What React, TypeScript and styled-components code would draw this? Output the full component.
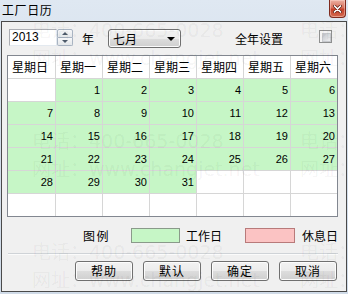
import React from "react";
import styled, { createGlobalStyle } from "styled-components";

const Global = createGlobalStyle`
  html, body { margin: 0; padding: 0; }
  body {
    width: 348px; height: 294px; overflow: hidden;
    background: #d6e1ee;
    font-family: "Noto Sans CJK SC", "Liberation Sans", sans-serif;
    color: #000;
  }
`;

const Window = styled.div`
  width: 348px;
  height: 294px;
  display: flex;
  flex-direction: column;
  background: linear-gradient(#dfe8f2, #d3deeb 40%, #d0dbe8);
`;

const TitleBar = styled.div`
  height: 21px;
  display: flex;
  align-items: flex-start;
  justify-content: space-between;
  padding-left: 2px;
`;

const Title = styled.div`
  font-size: 12px;
  line-height: 12px;
  margin-top: 4px;
  letter-spacing: 0.6px;
`;

const CloseButton = styled.div`
  width: 17px;
  height: 18px;
  margin-right: 2px;
  box-sizing: border-box;
  border: 1px solid #7e2a1e;
  border-top: none;
  border-radius: 0 0 4px 4px;
  background: linear-gradient(#ecb1a3, #d9705b 45%, #c5402a 55%, #d46a50);
  box-shadow: inset 0 0 0 1px rgba(255, 220, 210, 0.45);
  display: flex;
  align-items: center;
  justify-content: center;
`;

const Client = styled.div`
  position: relative;
  margin-left: 1px;
  width: 346px;
  height: 271px;
  box-sizing: border-box;
  border: 1px solid #4a4a4a;
  background: #f0f0f0;
  overflow: hidden;
  display: flex;
  flex-direction: column;
`;

const TopRow = styled.div`
  display: flex;
  align-items: flex-start;
  margin: 7px 0 0 7px;
  height: 19px;
`;

const YearBox = styled.div`
  width: 48px;
  height: 17px;
  box-sizing: border-box;
  border: 1px solid #abadb3;
  border-right-color: #e3e9ef;
  border-bottom-color: #e3e9ef;
  background: #fff;
  font-family: "Liberation Sans", sans-serif;
  font-size: 12px;
  line-height: 15px;
  padding-left: 2px;
`;

const Spinner = styled.div`
  width: 16px;
  height: 17px;
  display: flex;
  flex-direction: column;
`;

const SpinButton = styled.div<{ $down?: boolean }>`
  flex: 1;
  box-sizing: border-box;
  border: 1px solid #a9b4c2;
  border-top-width: ${(p) => (p.$down ? 0 : 1)}px;
  border-radius: ${(p) => (p.$down ? "0 0 2px 2px" : "2px 2px 0 0")};
  background: linear-gradient(#f7f8f9, #e4e7ea);
  display: flex;
  align-items: center;
  justify-content: center;
  &::after {
    content: "";
    border-left: 3px solid transparent;
    border-right: 3px solid transparent;
    ${(p) => (p.$down ? "border-top: 3px solid #4d5a6a;" : "border-bottom: 3px solid #4d5a6a;")}
  }
`;

const Label = styled.div<{ $ml: number; $ls?: number }>`
  margin-left: ${(p) => p.$ml}px;
  font-size: 12px;
  line-height: 19px;
  letter-spacing: ${(p) => p.$ls ?? 0}px;
  white-space: nowrap;
`;

const Select = styled.div`
  margin-left: 14px;
  width: 73px;
  height: 19px;
  box-sizing: border-box;
  border: 1px solid #707070;
  border-radius: 3px;
  background: linear-gradient(#f2f2f2, #ebebeb 50%, #dddddd 51%, #cfcfcf);
  box-shadow: inset 0 0 0 1px #fbfbfb;
  display: flex;
  align-items: center;
  justify-content: space-between;
  padding: 0 5px 0 4px;
  font-size: 12px;
  line-height: 17px;
  &::after {
    content: "";
    border-left: 4px solid transparent;
    border-right: 4px solid transparent;
    border-top: 4px solid #000;
  }
`;

const CheckBox = styled.div`
  margin: 1px 0 0 36px;
  width: 13px;
  height: 13px;
  box-sizing: border-box;
  border: 1px solid #8e8f8f;
  background: #f4f4f4;
  padding: 2px;
  &::after {
    content: "";
    display: block;
    width: 7px;
    height: 7px;
    border: 1px solid #c6c8cc;
    background: linear-gradient(135deg, #c3c7cd, #eeeff0);
  }
`;

const Grid = styled.div`
  margin: 7px 0 0 5px;
  width: 331px;
  box-sizing: border-box;
  border: 1px solid #828790;
  display: grid;
  grid-template-columns: 47px repeat(6, 46px);
  grid-auto-rows: 22px;
  gap: 1px;
  background: #d6d6d6;
`;

const HeadCell = styled.div`
  background: #fff;
  font-size: 12px;
  line-height: 22px;
  padding-left: 4px;
  white-space: nowrap;
`;

const DayCell = styled.div<{ $work: boolean }>`
  background: ${(p) => (p.$work ? "#c6f6c6" : "#fff")};
  font-family: "Liberation Sans", sans-serif;
  font-size: 11px;
  line-height: 22px;
  text-align: right;
  padding-right: 2px;
`;

const LegendRow = styled.div`
  display: flex;
  align-items: center;
  height: 16px;
  margin-top: 10px;
`;

const Swatch = styled.div<{ $ml: number; $w: number; $bg: string; $bd: string }>`
  margin-left: ${(p) => p.$ml}px;
  width: ${(p) => p.$w}px;
  height: 15px;
  box-sizing: border-box;
  background: ${(p) => p.$bg};
  border: 1px solid ${(p) => p.$bd};
`;

const Separator = styled.div`
  margin: 10px 0 0 6px;
  width: 330px;
  height: 0;
  border-top: 1px solid #cfd3d7;
  border-bottom: 1px solid #fbfbfb;
`;

const ButtonRow = styled.div`
  display: flex;
  gap: 10px;
  margin: 6px 0 0 73px;
`;

const Button = styled.div`
  width: 58px;
  height: 20px;
  box-sizing: border-box;
  border: 1px solid #707070;
  border-radius: 3px;
  background: linear-gradient(#f2f2f2, #ebebeb 50%, #dddddd 51%, #cfcfcf);
  box-shadow: inset 0 0 0 1px #fcfcfc;
  font-size: 12px;
  line-height: 18px;
  text-align: center;
  letter-spacing: 1px;
`;

const Watermark = styled.div<{ $top: number; $left: number }>`
  position: absolute;
  top: ${(p) => p.$top}px;
  left: ${(p) => p.$left}px;
  font-family: "DejaVu Sans", "Noto Sans CJK SC", sans-serif;
  font-size: 19px;
  line-height: 19px;
  color: rgba(0, 0, 0, 0.05);
  white-space: nowrap;
  pointer-events: none;
`;

const heads = ["星期日", "星期一", "星期二", "星期三", "星期四", "星期五", "星期六"];

const days: (number | null)[] = [];
for (let i = 0; i < 42; i++) {
  days.push(i >= 1 && i <= 31 ? i : null);
}

const marks: { top: number; left: number; text: string }[] = [];
[-1, 110, 221].forEach((t) => {
  [30, 298].forEach((l) => marks.push({ top: t, left: l, text: "电话：400-665-0028" }));
  [30, 298].forEach((l) => marks.push({ top: t + 28, left: l, text: "网址：www.changjet.net" }));
});

export default function App() {
  return (
    <>
      <Global />
      <Window>
        <TitleBar>
          <Title>工厂日历</Title>
          <CloseButton>
            <svg width="9" height="8" viewBox="0 0 9 8">
              <path d="M1.5 1 L7.5 7 M7.5 1 L1.5 7" stroke="#5a1a10" strokeWidth="3" strokeLinecap="round" />
              <path d="M1.5 1 L7.5 7 M7.5 1 L1.5 7" stroke="#fff" strokeWidth="1.7" strokeLinecap="round" />
            </svg>
          </CloseButton>
        </TitleBar>
        <Client>
          <TopRow>
            <YearBox>2013</YearBox>
            <Spinner>
              <SpinButton />
              <SpinButton $down />
            </Spinner>
            <Label $ml={9}>年</Label>
            <Select>七月</Select>
            <Label $ml={54}>全年设置</Label>
            <CheckBox />
          </TopRow>
          <Grid>
            {heads.map((h) => (
              <HeadCell key={h}>{h}</HeadCell>
            ))}
            {days.map((d, i) => (
              <DayCell key={i} $work={d !== null}>
                {d ?? ""}
              </DayCell>
            ))}
          </Grid>
          <LegendRow>
            <Label $ml={81} $ls={1.5}>图例</Label>
            <Swatch $ml={21} $w={49} $bg="#c6f6c6" $bd="#8a9a8a" />
            <Label $ml={6}>工作日</Label>
            <Swatch $ml={23} $w={50} $bg="#fbc3c3" $bd="#b87a7a" />
            <Label $ml={7}>休息日</Label>
          </LegendRow>
          <Separator />
          <ButtonRow>
            <Button>帮助</Button>
            <Button>默认</Button>
            <Button>确定</Button>
            <Button>取消</Button>
          </ButtonRow>
          {marks.map((m, i) => (
            <Watermark key={i} $top={m.top} $left={m.left}>
              {m.text}
            </Watermark>
          ))}
        </Client>
      </Window>
    </>
  );
}
